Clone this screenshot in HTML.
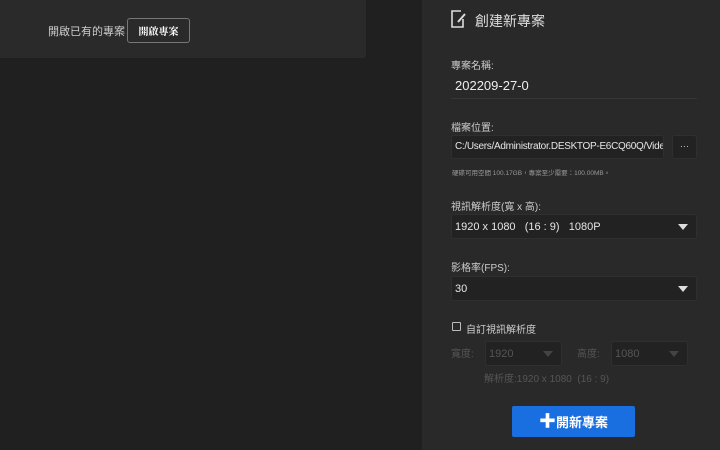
<!DOCTYPE html>
<html><head><meta charset="utf-8"><style>
*{margin:0;padding:0;box-sizing:border-box}
body{width:720px;height:450px;background:#202020;font-family:"Liberation Sans","Noto Sans CJK TC",sans-serif;color:#ddd;position:relative;overflow:hidden}
.a{position:absolute}
.bar{left:0;top:0;width:366px;height:58px;background:#2a2a2a;border-radius:0 0 3px 0}
.panel{left:422px;top:0;width:298px;height:450px;background:#292929}
.lbl{font-size:10px;color:#ccc}
.box{background:#222;border:1px solid #2f2f2f;border-radius:3px}
.sel{font-size:11px;color:#e6e6e6;padding-left:3px;line-height:25px}
.tri{position:absolute;right:8px;top:9px;width:0;height:0;border-left:5px solid transparent;border-right:5px solid transparent;border-top:6px solid #ddd}
.dis{color:#555}
</style></head><body>
<div class="a bar"></div>
<div class="a" style="left:48px;top:23px;font-size:11px;color:#ccc">開啟已有的專案</div>
<div class="a" style="left:127px;top:18px;width:63px;height:25px;border:1px solid #777;border-radius:3px;font-size:10px;font-weight:bold;color:#fff;text-align:center;line-height:23px;font-family:'Noto Serif CJK SC',serif">開啟專案</div>
<div class="a panel"></div>
<svg class="a" style="left:450px;top:10px" width="17" height="18" viewBox="0 0 17 18"><path d="M11 1H2v16h11V9" fill="none" stroke="#ddd" stroke-width="1.6"/><path d="M8 12l7-8" stroke="#ddd" stroke-width="2"/></svg>
<div class="a" style="left:475px;top:11px;font-size:14px;color:#ddd">創建新專案</div>
<div class="a lbl" style="left:451px;top:57px">專案名稱:</div>
<div class="a" style="left:455px;top:78px;font-size:13px;color:#eee">202209-27-0</div>
<div class="a" style="left:451px;top:98px;width:246px;height:1px;background:#363636"></div>
<div class="a lbl" style="left:451px;top:119px">檔案位置:</div>
<div class="a box" style="left:451px;top:135px;width:213px;height:24px;overflow:hidden;white-space:nowrap;font-size:10px;letter-spacing:-0.3px;line-height:22px;padding-left:3px;color:#e6e6e6">C:/Users/Administrator.DESKTOP-E6CQ60Q/Videos</div>
<div class="a box" style="left:672px;top:135px;width:25px;height:24px;text-align:center;font-size:9px;line-height:20px;color:#ccc">···</div>
<div class="a" style="left:452px;top:167px;font-size:6.5px;color:#999">硬碟可用空間 100.17GB，專案至少需要：100.00MB。</div>
<div class="a lbl" style="left:451px;top:198px">視訊解析度(寬 x 高):</div>
<div class="a box sel" style="left:451px;top:214px;width:246px;height:25px">1920 x 1080 &nbsp; (16 : 9) &nbsp; 1080P<span class="tri"></span></div>
<div class="a lbl" style="left:451px;top:259px">影格率(FPS):</div>
<div class="a box sel" style="left:451px;top:276px;width:246px;height:25px">30<span class="tri"></span></div>
<div class="a" style="left:452px;top:322px;width:9px;height:9px;border:1px solid #bbb;border-radius:1px"></div>
<div class="a lbl" style="left:466px;top:321px">自訂視訊解析度</div>
<div class="a lbl dis" style="left:451px;top:345px">寬度:</div>
<div class="a box sel dis" style="left:485px;top:341px;width:77px;height:25px;color:#555">1920<span class="tri" style="border-top-color:#444"></span></div>
<div class="a lbl dis" style="left:577px;top:345px">高度:</div>
<div class="a box sel dis" style="left:611px;top:341px;width:77px;height:25px;color:#555">1080<span class="tri" style="border-top-color:#444"></span></div>
<div class="a lbl dis" style="left:484px;top:370px">解析度:1920 x 1080 &nbsp;(16 : 9)</div>
<div class="a" style="left:512px;top:406px;width:123px;height:31px;background:#1a6fe0;border-radius:2px;color:#fff;font-size:13px;font-weight:bold;text-align:center;line-height:31px"><span style="font-size:17px">✚</span>開新專案</div>
</body></html>
